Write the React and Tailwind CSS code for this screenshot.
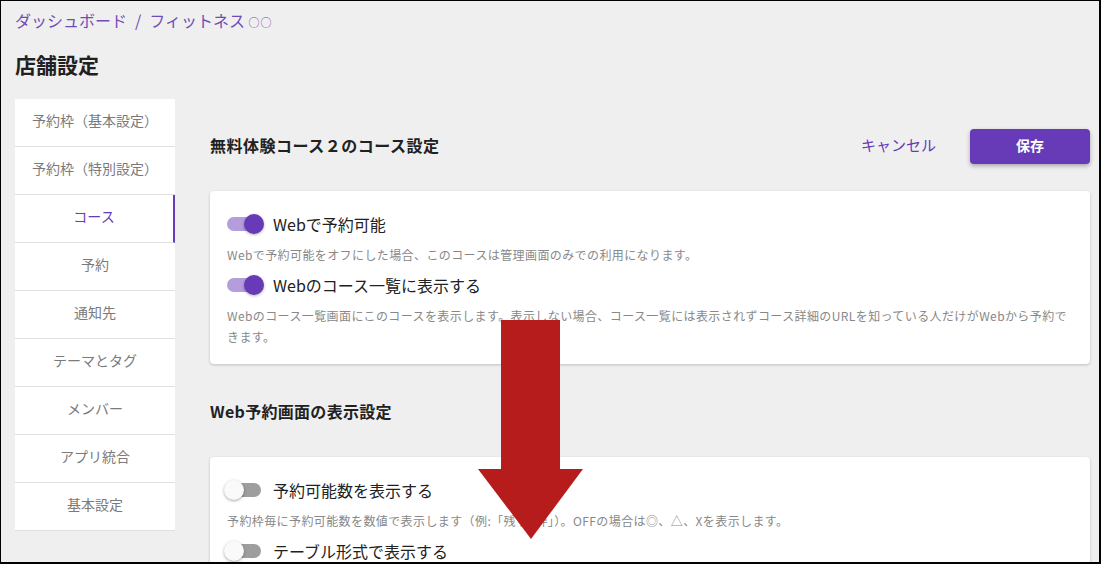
import React from 'react'

const menu = [
  '予約枠（基本設定）',
  '予約枠（特別設定）',
  'コース',
  '予約',
  '通知先',
  'テーマとタグ',
  'メンバー',
  'アプリ統合',
  '基本設定',
]

function Toggle({ on }) {
  return (
    <div className="relative w-[40px] h-[20px] -ml-[3px] shrink-0">
      <div
        className={
          on
            ? 'absolute left-[3px] top-[3px] w-[34px] h-[14px] rounded-full bg-[#b39ddb]'
            : 'absolute left-[3px] top-[3px] w-[34px] h-[14px] rounded-full bg-[#9e9e9e]'
        }
      />
      {on ? (
        <div className="absolute left-[20px] top-0 w-5 h-5 rounded-full bg-[#673ab7] shadow-[0_1px_3px_rgba(0,0,0,0.3)]" />
      ) : (
        <div className="absolute left-0 top-0 w-5 h-5 rounded-full bg-[#fafafa] shadow-[0_1px_3px_rgba(0,0,0,0.35)]" />
      )}
    </div>
  )
}

function SwitchRow({ on, label }) {
  return (
    <div className="flex items-center h-[28px] gap-[9px]">
      <Toggle on={on} />
      <span className="text-[16px] leading-[28px] text-[#212121]">{label}</span>
    </div>
  )
}

function Desc({ children }) {
  return <p className="mt-[6px] text-[12px] leading-[21px] tracking-[0.4px] text-[#888888]">{children}</p>
}

export default function App() {
  return (
    <div
      className="relative w-[1101px] h-[564px] overflow-hidden bg-[#efefef] border-black border-t border-l border-r-2 border-b-2"
      style={{ fontFamily: '"Noto Sans CJK JP", "Noto Sans", sans-serif' }}
    >
      <div className="pl-[14px] pt-[7px]">
        <div className="h-[24px] leading-[24px] text-[16px] text-[#6f4cb8]">
          ダッシュボード<span className="mx-[8px]">/</span>フィットネス <span className="text-[11px] tracking-[1px]">○○</span>
        </div>
        <h1 className="mt-[18px] h-[28px] leading-[28px] text-[21px] font-bold text-[#212121]">店舗設定</h1>

        <div className="flex mt-[21px]">
          <div className="w-[160px] shrink-0 self-start bg-white">
            {menu.map((m) => {
              const active = m === 'コース'
              return (
                <div
                  key={m}
                  className={
                    active
                      ? 'h-[48px] pb-[5px] flex items-center justify-center text-[14px] text-[#673ab7] border-b border-[#e0e0e0] border-r-2 border-r-[#673ab7]'
                      : 'h-[48px] pb-[5px] flex items-center justify-center text-[14px] text-[#7a7a7a] border-b border-[#e0e0e0] whitespace-nowrap'
                  }
                >
                  {m}
                </div>
              )
            })}
          </div>

          <div className="ml-[35px] w-[880px] pt-[30px]">
            <div className="flex items-center h-[35px]">
              <h2 className="flex-1 pb-[3px] text-[16px] tracking-[0.5px] font-bold text-[#212121]">無料体験コース２のコース設定</h2>
              <button className="h-[35px] px-[16px] pb-[2px] text-[15px] text-[#673ab7]">キャンセル</button>
              <button className="ml-[18px] w-[120px] h-[35px] pb-[2px] rounded-[4px] bg-[#673ab7] text-white text-[14px] font-bold shadow-[0_2px_4px_rgba(0,0,0,0.3)]">
                保存
              </button>
            </div>

            <div className="mt-[27px] bg-white rounded-[4px] shadow-[0_1px_3px_rgba(0,0,0,0.2)] pl-[17px] pr-[17px] pt-[19px] pb-[17px]">
              <SwitchRow on label="Webで予約可能" />
              <Desc>Webで予約可能をオフにした場合、このコースは管理画面のみでの利用になります。</Desc>
              <div className="mt-[6px]">
                <SwitchRow on label="Webのコース一覧に表示する" />
              </div>
              <Desc>
                Webのコース一覧画面にこのコースを表示します。表示しない場合、コース一覧には表示されずコース詳細のURLを知っている人だけがWebから予約できます。
              </Desc>
            </div>

            <h2 className="mt-[35px] h-[24px] leading-[24px] text-[16px] tracking-[0.3px] font-bold text-[#212121]">Web予約画面の表示設定</h2>

            <div className="mt-[34px] bg-white rounded-[4px] shadow-[0_1px_3px_rgba(0,0,0,0.2)] pl-[17px] pr-[17px] pt-[19px] pb-[16px]">
              <SwitchRow on={false} label="予約可能数を表示する" />
              <Desc>予約枠毎に予約可能数を数値で表示します（例:「残り2枠」）。OFFの場合は◎、△、Xを表示します。</Desc>
              <div className="mt-[6px]">
                <SwitchRow on={false} label="テーブル形式で表示する" />
              </div>
              <Desc>予約枠をテーブル形式で表示します。</Desc>
            </div>
          </div>
        </div>
      </div>

      <svg className="absolute left-[477px] top-[319px]" width="106" height="220" viewBox="0 0 106 220">
        <rect x="23" y="0" width="59" height="150" fill="#b71c1c" />
        <polygon points="0,149 105,149 53,219" fill="#b71c1c" />
      </svg>
    </div>
  )
}
